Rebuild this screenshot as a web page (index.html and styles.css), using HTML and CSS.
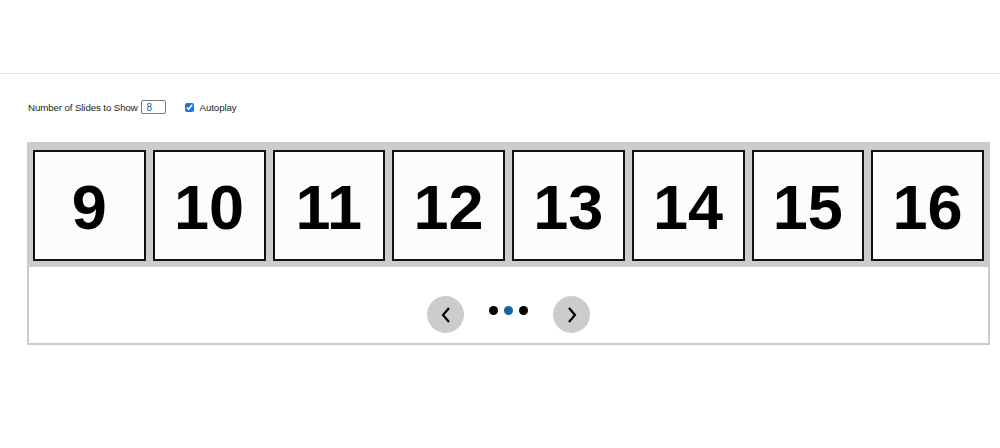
FILE: index.html
```html
<!DOCTYPE html>
<html>
<head>
<meta charset="utf-8">
<link rel="stylesheet" href="styles.css">
</head>
<body>
<div class="header"></div>
<div class="controls">
  <label class="ctl">Number of Slides to Show <input class="num" type="text" value="8"></label>
  <label class="ctl auto"><input class="chk" type="checkbox" checked> Autoplay</label>
</div>
<div class="carousel">
  <div class="track">
    <div class="slide">9</div>
    <div class="slide">10</div>
    <div class="slide">11</div>
    <div class="slide">12</div>
    <div class="slide">13</div>
    <div class="slide">14</div>
    <div class="slide">15</div>
    <div class="slide">16</div>
  </div>
  <div class="nav">
    <button class="arrow" aria-label="Previous"><svg width="12" height="18" viewBox="0 0 12 18"><polyline points="9,2 3,9 9,16" fill="none" stroke="#000" stroke-width="2.2"/></svg></button>
    <div class="dots"><span class="dot"></span><span class="dot active"></span><span class="dot"></span></div>
    <button class="arrow" aria-label="Next"><svg width="12" height="18" viewBox="0 0 12 18"><polyline points="3,2 9,9 3,16" fill="none" stroke="#000" stroke-width="2.2"/></svg></button>
  </div>
</div>
</body>
</html>
```
FILE: styles.css
```css
html, body {
  margin: 0;
  padding: 0;
  background: #fff;
}
body {
  font-family: "Liberation Sans", Arial, sans-serif;
}
.header {
  height: 73px;
  border-bottom: 1px solid #e4e4e4;
}
.controls {
  display: flex;
  align-items: center;
  padding: 25px 0 0 28px;
  height: 16px;
  font-size: 9.7px;
  color: #222;
}
.ctl {
  display: flex;
  align-items: center;
  letter-spacing: -0.1px;
}
.num {
  width: 25px;
  height: 14px;
  box-sizing: border-box;
  margin: 0 0 0 3px;
  padding: 0 0 0 5px;
  border: 1px solid #7a7a7a;
  border-radius: 2px;
  font-family: "Liberation Sans", Arial, sans-serif;
  font-size: 10px;
  color: #1a5e8e;
}
.auto {
  margin-left: 19px;
}
.chk {
  width: 9px;
  height: 9px;
  margin: 0 6px 0 0;
  accent-color: #1a73e8;
}
.carousel {
  margin: 27px 0 0 27px;
  width: 963px;
}
.track {
  display: grid;
  grid-template-columns: repeat(8, 1fr);
  gap: 7px;
  padding: 8px 6px 6px 6px;
  background: #cccccc;
}
.slide {
  height: 111px;
  box-sizing: border-box;
  border: 2px solid #111;
  background: #fdfbfd;
  display: flex;
  align-items: center;
  justify-content: center;
  font-weight: bold;
  font-size: 63px;
  color: #000;
  padding-top: 2px;
}
.nav {
  box-sizing: border-box;
  height: 78px;
  border: 2px solid #cccccc;
  border-top: none;
  display: flex;
  justify-content: center;
  align-items: flex-start;
  gap: 25px;
  padding-top: 29px;
}
.arrow {
  width: 37px;
  height: 37px;
  border-radius: 50%;
  border: none;
  background: #cccccc;
  padding: 0;
  display: flex;
  align-items: center;
  justify-content: center;
}
.dots {
  display: flex;
  gap: 6px;
  margin-top: 10px;
}
.dot {
  width: 9px;
  height: 9px;
  border-radius: 50%;
  background: #000;
}
.dot.active {
  background: #1565a0;
}
```
